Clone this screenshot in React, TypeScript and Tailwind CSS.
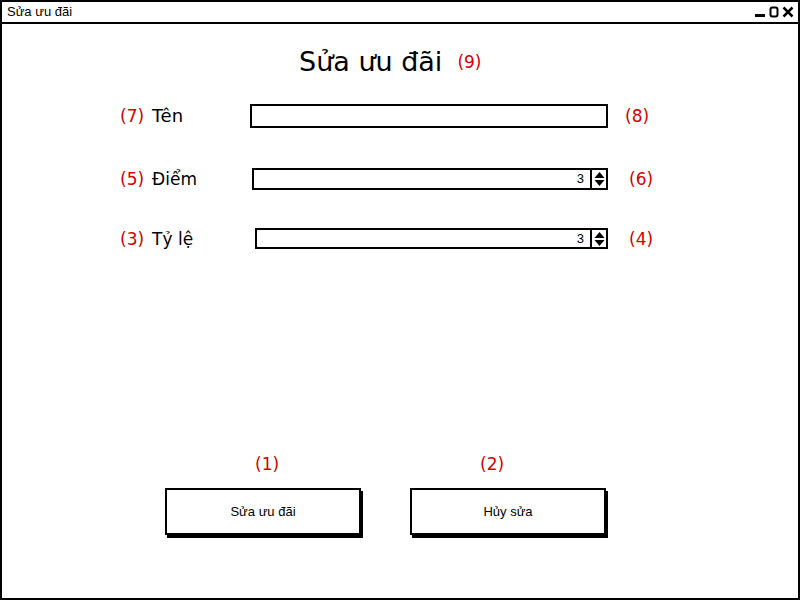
import React from 'react';

// Khung sườn (wireframe) màn hình "Sửa ưu đãi"

const FONT = "font-['Liberation_Sans','Noto_Sans',sans-serif]";
const LABEL = "font-['DejaVu_Sans','Noto_Sans',sans-serif]";

/** Nhãn số màu đỏ, ví dụ (7) */
const Tag: React.FC<{ n: number; className?: string }> = ({ n, className = '' }) => (
  <span className={`${LABEL} text-[17px] leading-[20px] text-[#d40000] ${className}`}>({n})</span>
);

/** Ô số có nút tăng/giảm */
const Spinner: React.FC<{ width: string; value: string }> = ({ width, value }) => (
  <div className={`${width} h-full border-2 border-black bg-white flex items-stretch`}>
    <div className="flex-1 flex items-center justify-end pr-[6px] text-[13px] text-black">{value}</div>
    <div className="w-[16px] border-l-2 border-black flex items-center justify-center">
      <svg width="11" height="16" viewBox="0 0 11 16">
        <path d="M0.5 7 L5.5 1 L10.5 7 Z" fill="#000" />
        <path d="M0.5 9 L5.5 15 L10.5 9 Z" fill="#000" />
      </svg>
    </div>
  </div>
);

export default function App() {
  return (
    <div className={`w-[800px] h-[600px] bg-white ${FONT} text-black`}>
      <div className="w-full h-full border-2 border-black flex flex-col">
        {/* Thanh tiêu đề cửa sổ */}
        <div className="h-[22px] border-b-2 border-black flex items-center justify-between pl-[5px] pr-[4px]">
          <span className="text-[13px]">Sửa ưu đãi</span>
          <div className="flex items-center gap-[3px]">
            <svg width="12" height="12" viewBox="0 0 12 12">
              <rect x="1" y="8" width="10" height="3" fill="#000" />
            </svg>
            <svg width="10" height="12" viewBox="0 0 10 12">
              <rect x="1.5" y="1.5" width="7" height="9" rx="2" fill="none" stroke="#000" strokeWidth="2" />
            </svg>
            <svg width="12" height="12" viewBox="0 0 12 12">
              <path d="M1.5 1.5 L10.5 10.5 M10.5 1.5 L1.5 10.5" stroke="#000" strokeWidth="2.5" />
            </svg>
          </div>
        </div>

        {/* Nội dung */}
        <div className="flex-1 flex flex-col">
          {/* Tiêu đề */}
          <div className="mt-[22px] h-[32px] flex items-center pl-[297px]">
            <span className={`${LABEL} text-[27px] leading-[32px]`}>Sửa ưu đãi</span>
            <Tag n={9} className="ml-[15px]" />
          </div>

          {/* Tên */}
          <div className="mt-[26px] h-[24px] flex items-center pl-[118px]">
            <div className="w-[130px] flex items-center gap-[8px]">
              <Tag n={7} />
              <span className={`${LABEL} text-[18px] leading-[20px]`}>Tên</span>
            </div>
            <div className="w-[358px] h-full border-2 border-black bg-white" />
            <Tag n={8} className="ml-[17px]" />
          </div>

          {/* Điểm */}
          <div className="mt-[40px] h-[22px] flex items-center pl-[118px]">
            <div className="w-[132px] flex items-center gap-[8px]">
              <Tag n={5} />
              <span className={`${LABEL} text-[17px] leading-[20px]`}>Điểm</span>
            </div>
            <Spinner width="w-[356px]" value="3" />
            <Tag n={6} className="ml-[21px]" />
          </div>

          {/* Tỷ lệ */}
          <div className="mt-[38px] h-[21px] flex items-center pl-[118px]">
            <div className="w-[135px] flex items-center gap-[8px]">
              <Tag n={3} />
              <span className={`${LABEL} text-[17px] leading-[20px]`}>Tỷ lệ</span>
            </div>
            <Spinner width="w-[353px]" value="3" />
            <Tag n={4} className="ml-[21px]" />
          </div>

          {/* Nút */}
          <div className="mt-auto mb-[63px] flex pl-[163px] gap-[49px]">
            <div className="w-[196px] flex flex-col items-start">
              <Tag n={1} className="mb-[14px] ml-[90px]" />
              <button className="w-full h-[47px] border-2 border-black bg-white shadow-[2px_3px_0_0_#000] text-[13px]">
                Sửa ưu đãi
              </button>
            </div>
            <div className="w-[196px] flex flex-col items-start">
              <Tag n={2} className="mb-[14px] ml-[70px]" />
              <button className="w-full h-[47px] border-2 border-black bg-white shadow-[2px_3px_0_0_#000] text-[13px]">
                Hủy sửa
              </button>
            </div>
          </div>
        </div>
      </div>
    </div>
  );
}
